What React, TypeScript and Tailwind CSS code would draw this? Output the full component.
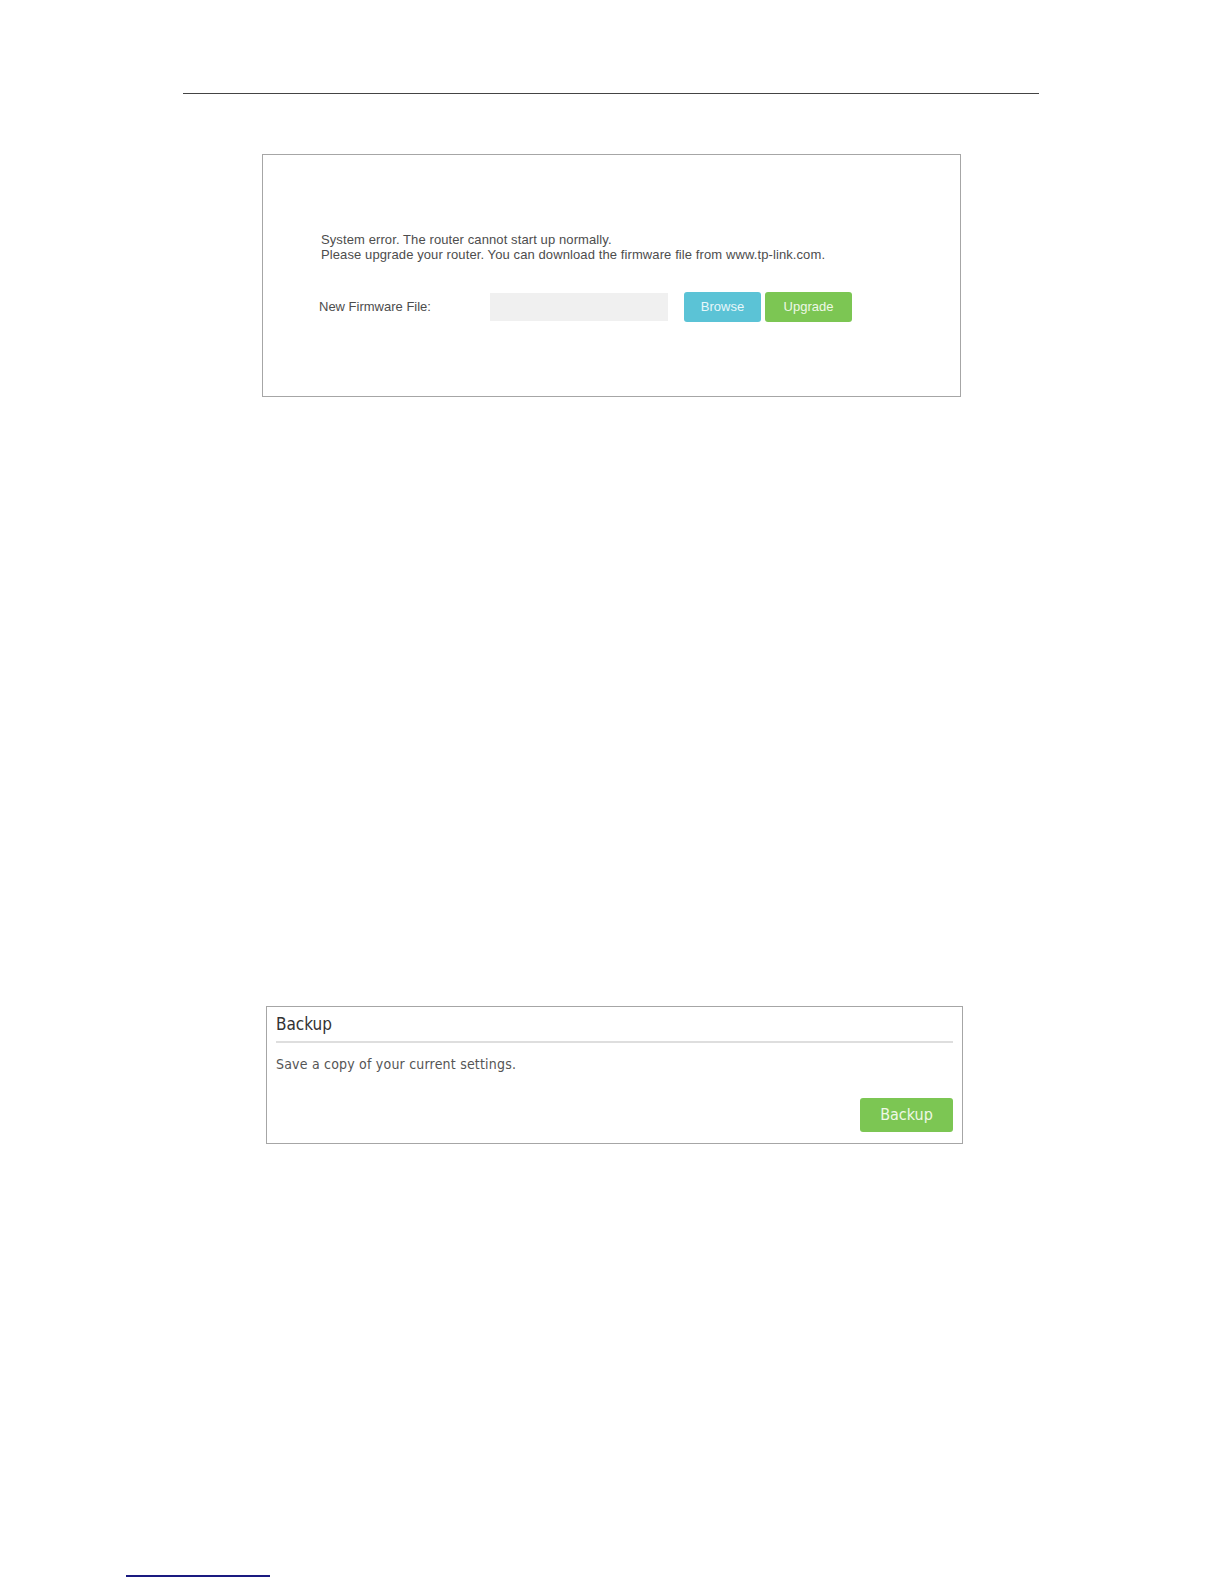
const narrow = { fontFamily: '"Liberation Sans", Arial, sans-serif' };
const tahoma = { fontFamily: '"DejaVu Sans Condensed", "DejaVu Sans", Verdana, sans-serif' };

function RecoveryPanel() {
  return (
    <div className="ml-[262px] mt-[60px] w-[699px] h-[243px] border border-[#a6a6a6] bg-white" style={narrow}>
      <div className="pl-[58px] pt-[77px] text-[13px] leading-[15px] tracking-[0.1px] text-[#4d4d4d]">
        <p>System error. The router cannot start up normally.</p>
        <p>Please upgrade your router. You can download the firmware file from www.tp-link.com.</p>
      </div>
      <div className="mt-[30px] pl-[56px] flex items-center">
        <span className="w-[171px] text-[13px] text-[#4d4d4d]">New Firmware File:</span>
        <div className="w-[178px] h-[28px] bg-[#f0f0f0]" />
        <button className="ml-[16px] w-[77px] h-[30px] rounded-[3px] bg-[#5bc3d6] text-[13px] text-[#e8f7fa]">
          Browse
        </button>
        <button className="ml-[4px] w-[87px] h-[30px] rounded-[3px] bg-[#7cc653] text-[13px] text-[#eef8e6]">
          Upgrade
        </button>
      </div>
    </div>
  );
}

function BackupCard() {
  return (
    <div className="ml-[266px] mt-[609px] w-[697px] h-[138px] border border-[#a6a6a6] bg-white px-[9px]" style={tahoma}>
      <h3 className="pt-[5px] h-[34px] text-[17px] leading-[24px] text-[#333]">Backup</h3>
      <div className="h-[2px] bg-[#dedede]" />
      <p className="mt-[12px] text-[14px] leading-[18px] tracking-[0.2px] text-[#555]">
        Save a copy of your current settings.
      </p>
      <div className="mt-[25px] flex justify-end">
        <button className="w-[93px] h-[34px] rounded-[3px] bg-[#7cc653] text-[16px] text-[#eef8e6]">Backup</button>
      </div>
    </div>
  );
}

export default function App() {
  return (
    <div className="w-[1224px] h-[1584px] bg-white relative overflow-hidden">
      <div className="pt-[93px]">
        <div className="ml-[183px] w-[856px] h-px bg-[#444]" />
      </div>
      <RecoveryPanel />
      <BackupCard />
      <div className="mt-[431px] ml-[126px] w-[144px] h-[2px] bg-[#1a1a80]" />
    </div>
  );
}
